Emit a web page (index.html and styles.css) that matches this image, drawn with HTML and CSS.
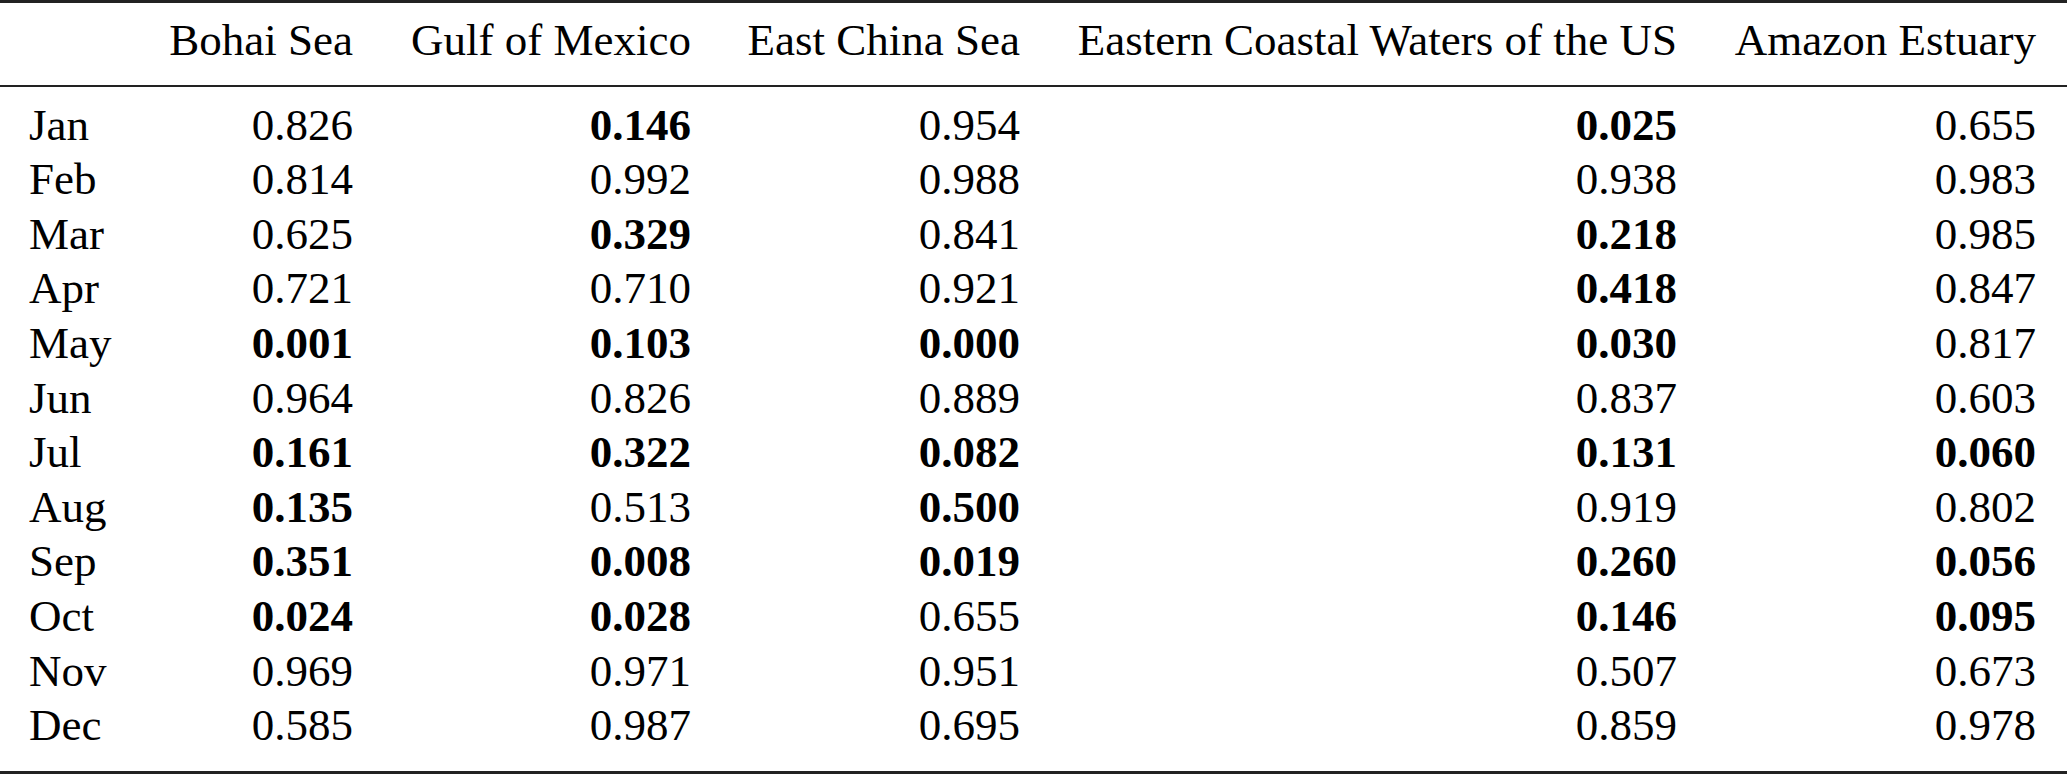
FILE: index.html
```html
<!DOCTYPE html>
<html lang="en">
<head>
<meta charset="utf-8">
<title>Monthly p-values by region</title>
<link rel="stylesheet" href="styles.css">
</head>
<body>
<table class="results">
  <colgroup>
    <col class="c-month">
    <col class="c-bohai">
    <col class="c-gulf">
    <col class="c-ecs">
    <col class="c-ecus">
    <col class="c-amazon">
  </colgroup>
  <thead>
    <tr>
      <th class="month"></th>
      <th>Bohai Sea</th>
      <th>Gulf of Mexico</th>
      <th>East China Sea</th>
      <th>Eastern Coastal Waters of the US</th>
      <th>Amazon Estuary</th>
    </tr>
  </thead>
  <tbody>
    <tr><td class="month">Jan</td><td>0.826</td><td class="sig">0.146</td><td>0.954</td><td class="sig">0.025</td><td>0.655</td></tr>
    <tr><td class="month">Feb</td><td>0.814</td><td>0.992</td><td>0.988</td><td>0.938</td><td>0.983</td></tr>
    <tr><td class="month">Mar</td><td>0.625</td><td class="sig">0.329</td><td>0.841</td><td class="sig">0.218</td><td>0.985</td></tr>
    <tr><td class="month">Apr</td><td>0.721</td><td>0.710</td><td>0.921</td><td class="sig">0.418</td><td>0.847</td></tr>
    <tr><td class="month">May</td><td class="sig">0.001</td><td class="sig">0.103</td><td class="sig">0.000</td><td class="sig">0.030</td><td>0.817</td></tr>
    <tr><td class="month">Jun</td><td>0.964</td><td>0.826</td><td>0.889</td><td>0.837</td><td>0.603</td></tr>
    <tr><td class="month">Jul</td><td class="sig">0.161</td><td class="sig">0.322</td><td class="sig">0.082</td><td class="sig">0.131</td><td class="sig">0.060</td></tr>
    <tr><td class="month">Aug</td><td class="sig">0.135</td><td>0.513</td><td class="sig">0.500</td><td>0.919</td><td>0.802</td></tr>
    <tr><td class="month">Sep</td><td class="sig">0.351</td><td class="sig">0.008</td><td class="sig">0.019</td><td class="sig">0.260</td><td class="sig">0.056</td></tr>
    <tr><td class="month">Oct</td><td class="sig">0.024</td><td class="sig">0.028</td><td>0.655</td><td class="sig">0.146</td><td class="sig">0.095</td></tr>
    <tr><td class="month">Nov</td><td>0.969</td><td>0.971</td><td>0.951</td><td>0.507</td><td>0.673</td></tr>
    <tr><td class="month">Dec</td><td>0.585</td><td>0.987</td><td>0.695</td><td>0.859</td><td>0.978</td></tr>
  </tbody>
</table>
</body>
</html>
```

FILE: styles.css
```css
html, body {
  margin: 0;
  padding: 0;
  background: #ffffff;
}

.results {
  width: 2067px;
  table-layout: fixed;
  border-collapse: collapse;
  border-spacing: 0;
  font-family: "Liberation Serif", "Times New Roman", serif;
  font-size: 45px;
  line-height: 54.6px;
  color: #000;
  border-top: 3px solid #222;
  border-bottom: 3px solid #222;
}

.c-month { width: 142px; }
.c-bohai { width: 242px; }
.c-gulf { width: 338px; }
.c-ecs { width: 329px; }
.c-ecus { width: 657px; }
.c-amazon { width: 359px; }

.results th,
.results td {
  padding: 0 31px 0 0;
  text-align: right;
  font-weight: normal;
  white-space: nowrap;
}

.results .month {
  text-align: left;
  padding: 0 0 0 29px;
}

.results thead tr {
  border-bottom: 2px solid #222;
}

.results thead th {
  padding-top: 9.5px;
  padding-bottom: 18px;
}

.results tbody tr:first-child td {
  padding-top: 10.5px;
}

.results tbody tr:last-child td {
  padding-bottom: 18.3px;
}

.results td.sig {
  font-weight: bold;
}
```
